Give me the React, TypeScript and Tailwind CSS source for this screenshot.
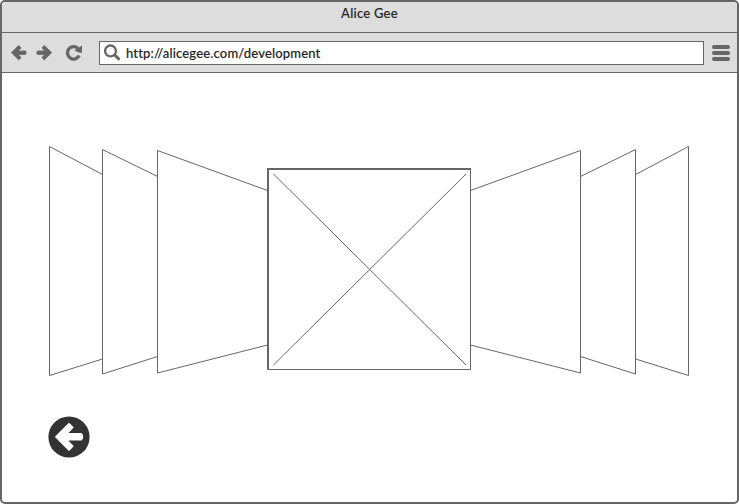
function BackIcon({ flip = false }: { flip?: boolean }) {
  return (
    <svg width="17" height="17" viewBox="0 0 17 17" className={flip ? '-scale-x-100' : ''} fill="#666" stroke="#666" strokeWidth="1" strokeLinejoin="round">
      <path d="M1.5 8.7 L8.7 1.6 L11 3.8 L7.9 7.1 H15.6 Q16.8 8.7 15.6 10.3 H7.9 L11 13.6 L8.7 15.8 Z" />
    </svg>
  );
}

function ReloadIcon() {
  return (
    <svg width="17" height="17" viewBox="0 0 17 17" fill="none">
      <path d="M14.2 11.6 A6.2 6.2 0 1 1 13 4.4" stroke="#666" strokeWidth="3.3" />
      <path d="M17 1.6 V8.8 H14.5 L9.4 6.6 Z" fill="#666" />
    </svg>
  );
}

function SearchIcon() {
  return (
    <svg width="17" height="17" viewBox="0 0 17 17" fill="none" stroke="#666">
      <circle cx="6.5" cy="6.9" r="5.4" strokeWidth="2.3" />
      <path d="M10.8 11 L14.6 14.8" strokeWidth="3" strokeLinecap="round" />
    </svg>
  );
}

function Carousel() {
  return (
    <svg width="642" height="236" viewBox="48 143 642 236" className="block" fill="white" stroke="#666" strokeWidth="1">
      <path d="M102.5 174.5 L49.5 146.5 V375.5 L102.5 359" />
      <path d="M157.5 176.5 L102.5 149.5 V374 L157.5 356.5" />
      <path d="M267.5 190.5 L157.5 150.5 V373 L267.5 345" />
      <path d="M635.5 174.5 L688.5 146.5 V375.5 L635.5 359" />
      <path d="M580.5 176.5 L635.5 149.5 V374 L580.5 356.5" />
      <path d="M470.5 190.5 L580.5 150.5 V373 L470.5 345" />
      <rect x="267" y="168" width="204" height="202" fill="#666" stroke="none" />
      <rect x="269" y="170" width="201" height="199" stroke="none" />
      <path d="M273.5 174 L466 365 M466 174 L273.5 365" />
    </svg>
  );
}

export default function App() {
  return (
    <div className="h-[504px] w-[739px] bg-white font-['Lato','Noto_Sans',sans-serif] text-[13px] text-[#222]">
      <div className="flex h-full flex-col overflow-hidden rounded-[5px] border-2 border-[#666] bg-white">
        <header className="flex h-[31px] shrink-0 justify-center border-b border-[#666] bg-[#ddd] pt-[3px]">
          <span className="h-4 text-[13px] leading-4 font-medium tracking-[0.25px] whitespace-nowrap [-webkit-text-stroke:0.1px]">Alice Gee</span>
        </header>
        <nav className="flex h-10 shrink-0 items-center border-b border-[#666] bg-[#ddd] pr-[7px] pl-2">
          <BackIcon />
          <div className="ml-[9px]"><BackIcon flip /></div>
          <div className="ml-3"><ReloadIcon /></div>
          <div className="ml-[17px] flex h-6 w-[605px] items-center border border-[#666] bg-white pl-1">
            <SearchIcon />
            <span className="ml-[5px] leading-4 font-medium tracking-[0.17px] whitespace-nowrap [-webkit-text-stroke:0.12px]">http://alicegee.com/development</span>
          </div>
          <div className="ml-2 flex w-[18px] flex-col gap-0.5">
            <i className="h-1 rounded-full bg-[#666]" />
            <i className="h-1 rounded-full bg-[#666]" />
            <i className="h-1 rounded-full bg-[#666]" />
          </div>
        </nav>
        <main className="flex flex-col items-start pt-[70px] pl-[46px]">
          <Carousel />
          <button className="mt-[37px]" aria-label="Back">
            <svg width="42" height="42" viewBox="0 0 42 42" fill="none">
              <circle cx="21" cy="21" r="20.6" fill="#333" />
              <path d="M8 20.8 L21 7.8 L24.6 11.4 L18.2 18 H33.4 Q35.2 20.8 33.4 23.6 H18.2 L24.6 30.2 L21 33.8 Z" fill="white" stroke="white" strokeWidth="1.8" strokeLinejoin="round" />
            </svg>
          </button>
        </main>
      </div>
    </div>
  );
}
